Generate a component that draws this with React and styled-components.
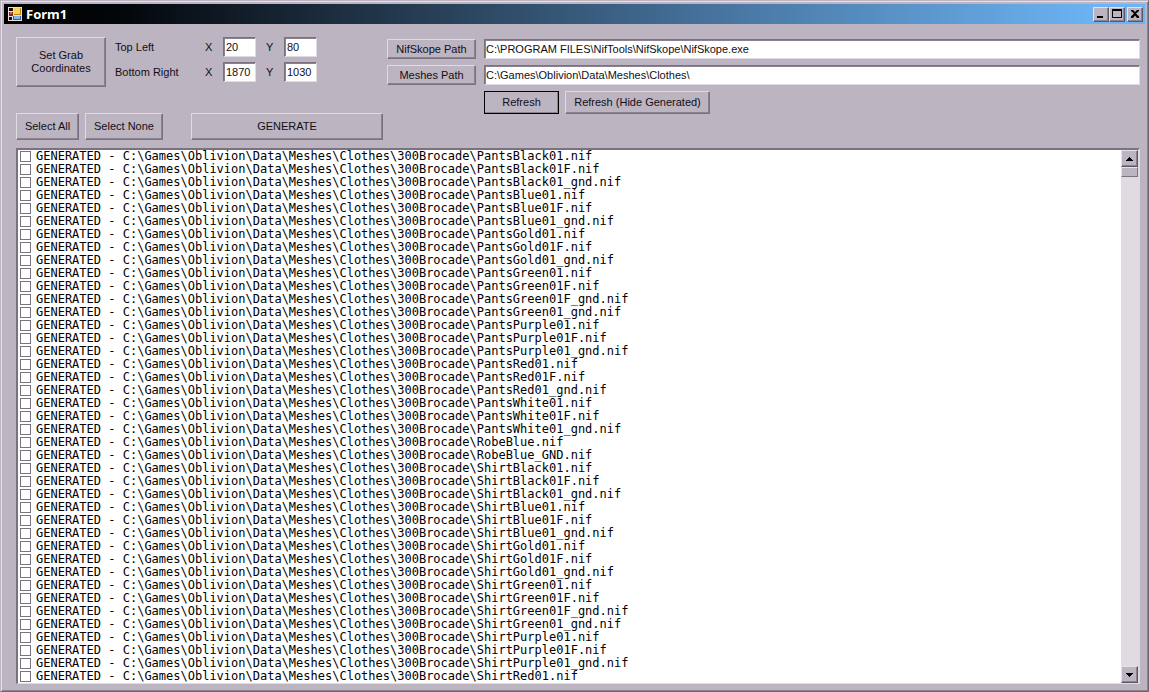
import React, { useRef, useState } from 'react';
import styled, { createGlobalStyle } from 'styled-components';

const ROOT = 'C:\\Games\\Oblivion\\Data\\Meshes\\Clothes\\';

const files = [
    'PantsBlack01', 'PantsBlack01F', 'PantsBlack01_gnd',
    'PantsBlue01', 'PantsBlue01F', 'PantsBlue01_gnd',
    'PantsGold01', 'PantsGold01F', 'PantsGold01_gnd',
    'PantsGreen01', 'PantsGreen01F', 'PantsGreen01F_gnd', 'PantsGreen01_gnd',
    'PantsPurple01', 'PantsPurple01F', 'PantsPurple01_gnd',
    'PantsRed01', 'PantsRed01F', 'PantsRed01_gnd',
    'PantsWhite01', 'PantsWhite01F', 'PantsWhite01_gnd',
    'RobeBlue', 'RobeBlue_GND',
    'ShirtBlack01', 'ShirtBlack01F', 'ShirtBlack01_gnd',
    'ShirtBlue01', 'ShirtBlue01F', 'ShirtBlue01_gnd',
    'ShirtGold01', 'ShirtGold01F', 'ShirtGold01_gnd',
    'ShirtGreen01', 'ShirtGreen01F', 'ShirtGreen01F_gnd', 'ShirtGreen01_gnd',
    'ShirtPurple01', 'ShirtPurple01F', 'ShirtPurple01_gnd',
    'ShirtRed01',
];

function App() {

    const [checked, setChecked] = useState([]);
    const listRef = useRef(null);

    const toggle = (name) => {
        setChecked(checked.includes(name) ? checked.filter((c) => c !== name) : [...checked, name]);
    };

    const scroll = (amount) => {
        listRef.current.scrollBy({ top: amount });
    };

    return (
        <Window>
            <GlobalStyle />
            <TitleBar>
                <FormIcon />
                <Title>Form1</Title>
                <CaptionButton aria-label="Minimize">
                    <svg width="12" height="10" viewBox="0 0 12 10"><path d="M2 7h6v2H2z" /></svg>
                </CaptionButton>
                <CaptionButton aria-label="Maximize">
                    <svg width="12" height="10" viewBox="0 0 12 10"><path d="M1 0h10v9H1zM2 2v6h8V2z" fillRule="evenodd" /></svg>
                </CaptionButton>
                <CloseButton aria-label="Close">
                    <svg width="12" height="10" viewBox="0 0 12 10"><path d="M2 1h2l2 2 2-2h2v1L7 4.500 10 7.500V9H8L6 6.500 4 9H2V7.500L5 4.500 2 2z" /></svg>
                </CloseButton>
            </TitleBar>
            <Client>
                <Controls>
                    <LeftControls>
                        <CoordinateRow>
                            <Button>Set Grab<br />Coordinates</Button>
                            <Coordinates>
                                <span>Top Left</span>
                                <label htmlFor="left">X</label>
                                <NumberBox id="left" defaultValue="20" />
                                <label htmlFor="top">Y</label>
                                <NumberBox id="top" defaultValue="80" />
                                <span>Bottom Right</span>
                                <label htmlFor="right">X</label>
                                <NumberBox id="right" defaultValue="1870" />
                                <label htmlFor="bottom">Y</label>
                                <NumberBox id="bottom" defaultValue="1030" />
                            </Coordinates>
                        </CoordinateRow>
                        <SelectRow>
                            <Button onClick={() => setChecked(files)}>Select All</Button>
                            <Button onClick={() => setChecked([])}>Select None</Button>
                            <GenerateButton>GENERATE</GenerateButton>
                        </SelectRow>
                    </LeftControls>
                    <Paths>
                        <Button>NifSkope Path</Button>
                        <TextBox aria-label="NifSkope Path" defaultValue="C:\PROGRAM FILES\NifTools\NifSkope\NifSkope.exe" />
                        <Button>Meshes Path</Button>
                        <TextBox aria-label="Meshes Path" defaultValue={ROOT} />
                        <RefreshRow>
                            <Button $primary>Refresh</Button>
                            <Button>Refresh (Hide Generated)</Button>
                        </RefreshRow>
                    </Paths>
                </Controls>
                <ListBox>
                    <List ref={listRef}>
                        {files.map((name) => (
                            <li key={name}>
                                <Item>
                                    <CheckBox type="checkbox" checked={checked.includes(name)} onChange={() => toggle(name)} />
                                    <span>GENERATED - {ROOT}300Brocade\{name}.nif</span>
                                </Item>
                            </li>
                        ))}
                    </List>
                    <ScrollBar>
                        <ScrollButton aria-label="Scroll up" onClick={() => scroll(-13)}>
                            <svg width="7" height="4" viewBox="0 0 7 4" shapeRendering="crispEdges"><path d="M3 0h1v1h1v1h1v1h1v1H0V3h1V2h1V1h1z" /></svg>
                        </ScrollButton>
                        <Thumb />
                        <ScrollButton aria-label="Scroll down" onClick={() => scroll(13)}>
                            <svg width="7" height="4" viewBox="0 0 7 4" shapeRendering="crispEdges"><path d="M0 0h7v1H6v1H5v1H4v1H3V3H2V2H1V1H0z" /></svg>
                        </ScrollButton>
                    </ScrollBar>
                </ListBox>
            </Client>
        </Window>
    )
}

function FormIcon() {
    return (
        <svg width="14" height="14" viewBox="0 0 14 14" shapeRendering="crispEdges">
            <path fill="#e8e0d8" d="M0 0h14v14H0z" />
            <path fill="#17120f" d="M1 1h4v3H1zM1 10h3v3H1z" />
            <path fill="#8d2417" d="M1 5h4v4H1z" />
            <path fill="#e0603c" d="M2 5h2v2H2z" />
            <path fill="#b98512" d="M6 1h7v7H6z" />
            <path fill="#f8d450" d="M6 1h6v6H6z" />
            <path fill="#3462b4" d="M5 9h8v4H5z" />
            <path fill="#82b4f0" d="M6 9h6v3H6z" />
        </svg>
    )
}

export default App;

const GlobalStyle = createGlobalStyle`
    * {
        box-sizing: border-box;
    }
    body {
        margin: 0;
        background: #bcb4c0;
        color: #120e16;
        font-family: "Liberation Sans", Arial, sans-serif;
        font-size: 11px;
        line-height: 13px;
    }
    button, input {
        font: inherit;
        color: inherit;
        margin: 0;
        border-radius: 0;
    }
`;

const Window = styled.div`
    min-height: 100vh;
    display: flex;
    flex-direction: column;
    padding: 2px;
    background: #bcb4c0;
    border: 1px solid;
    border-color: #bcb4c0 #6e6672 #6e6672 #bcb4c0;
    box-shadow: inset 1px 1px #e6e0e8, inset -1px -1px #8a828e;
`;

const TitleBar = styled.header`
    display: flex;
    align-items: center;
    height: 20px;
    margin: 1px 1px 0;
    padding: 0 2px 0 4px;
    background: linear-gradient(90deg, #000 0%, #03060a 10%, #243a50 35%, #4b7ba8 66%, #6cb4f4 96%);
`;

const Title = styled.h1`
    flex: 1;
    margin: 0;
    padding-left: 4px;
    color: #fff;
    font-family: "Noto Sans", sans-serif;
    font-size: 13px;
    font-weight: 700;
    line-height: 20px;
`;

const CaptionButton = styled.button`
    display: flex;
    align-items: center;
    justify-content: center;
    width: 16px;
    height: 15px;
    padding: 0;
    background: #bcb4c0;
    border: 1px solid;
    border-color: #e6e0e8 #5e5662 #5e5662 #e6e0e8;
    box-shadow: inset -1px -1px #8a828e;
`;

const CloseButton = styled(CaptionButton)`
    margin-left: 2px;
`;

const Client = styled.main`
    flex: 1;
    display: flex;
    flex-direction: column;
    gap: 8px;
    padding: 13px 6px 5px 13px;
`;

const Controls = styled.div`
    display: flex;
    gap: 4px;
`;

const LeftControls = styled.div`
    display: flex;
    flex-direction: column;
    gap: 26px;
`;

const CoordinateRow = styled.div`
    display: grid;
    grid-template-columns: 90px auto;
    column-gap: 9px;
    height: 50px;
`;

const Coordinates = styled.div`
    display: grid;
    grid-template-columns: 90px 18px 43px 18px 33px;
    grid-auto-rows: 20px;
    row-gap: 5px;
    align-items: center;
`;

const SelectRow = styled.div`
    display: grid;
    grid-template-columns: 63px 78px 214px;
    column-gap: 6px;
    height: 27px;
`;

const Paths = styled.div`
    flex: 1;
    display: grid;
    grid-template-columns: 89px 1fr;
    grid-template-rows: 20px 20px 23px;
    gap: 6px 8px;
    padding-top: 2px;
`;

const RefreshRow = styled.div`
    grid-column: 2;
    display: grid;
    grid-template-columns: 75px 145px;
    column-gap: 6px;
`;

const Button = styled.button`
    padding: 0;
    background: #bcb4c0;
    border: 1px solid;
    border-color: #e0dae4 #7a727e #7a727e #e0dae4;
    box-shadow: inset -1px -1px #8a828e;
    outline: ${props => props.$primary ? '1px solid #000' : 'none'};
    outline-offset: -1px;
`;

const GenerateButton = styled(Button)`
    margin-left: 22px;
`;

const TextBox = styled.input`
    width: 100%;
    height: 20px;
    padding: 0 0 1px 1px;
    background: #fff;
    border: 1px solid;
    border-color: #7a727e #e0dae4 #e0dae4 #7a727e;
    box-shadow: inset 1px 1px #8a828e;
    outline: none;
`;

const NumberBox = styled(TextBox)`
    width: 33px;
    padding-left: 2px;
`;

const ListBox = styled.div`
    flex: 1;
    display: flex;
    background: #fff;
    border: 2px solid;
    border-width: 2px 2px 1px 2px;
    border-color: #7a727e #e0dae4 #e0dae4 #7a727e;
`;

const List = styled.ul`
    flex: 1;
    margin: 0;
    padding: 0 0 0 2px;
    overflow: hidden;
    list-style: none;
    color: #000;
    font-family: "DejaVu Sans Mono", monospace;
    font-size: 12px;
    line-height: 13px;
`;

const Item = styled.label`
    display: flex;
    align-items: center;
    gap: 5px;
    height: 13px;
    white-space: pre;
`;

const CheckBox = styled.input`
    appearance: none;
    width: 11px;
    height: 11px;
    background: #fff;
    border: 1px solid #7a727e;

    &:checked {
        background: #7a727e;
        box-shadow: inset 0 0 0 2px #fff;
    }
`;

const ScrollBar = styled.div`
    display: flex;
    flex-direction: column;
    width: 17px;
    background: #e0dae2;
`;

const ScrollButton = styled(CaptionButton)`
    width: 17px;
    height: 17px;

    &:last-child {
        margin-top: auto;
    }
`;

const Thumb = styled.div`
    height: 10px;
    background: #bcb4c0;
    border: 1px solid;
    border-color: #e6e0e8 #7a727e #7a727e #e6e0e8;
`;
